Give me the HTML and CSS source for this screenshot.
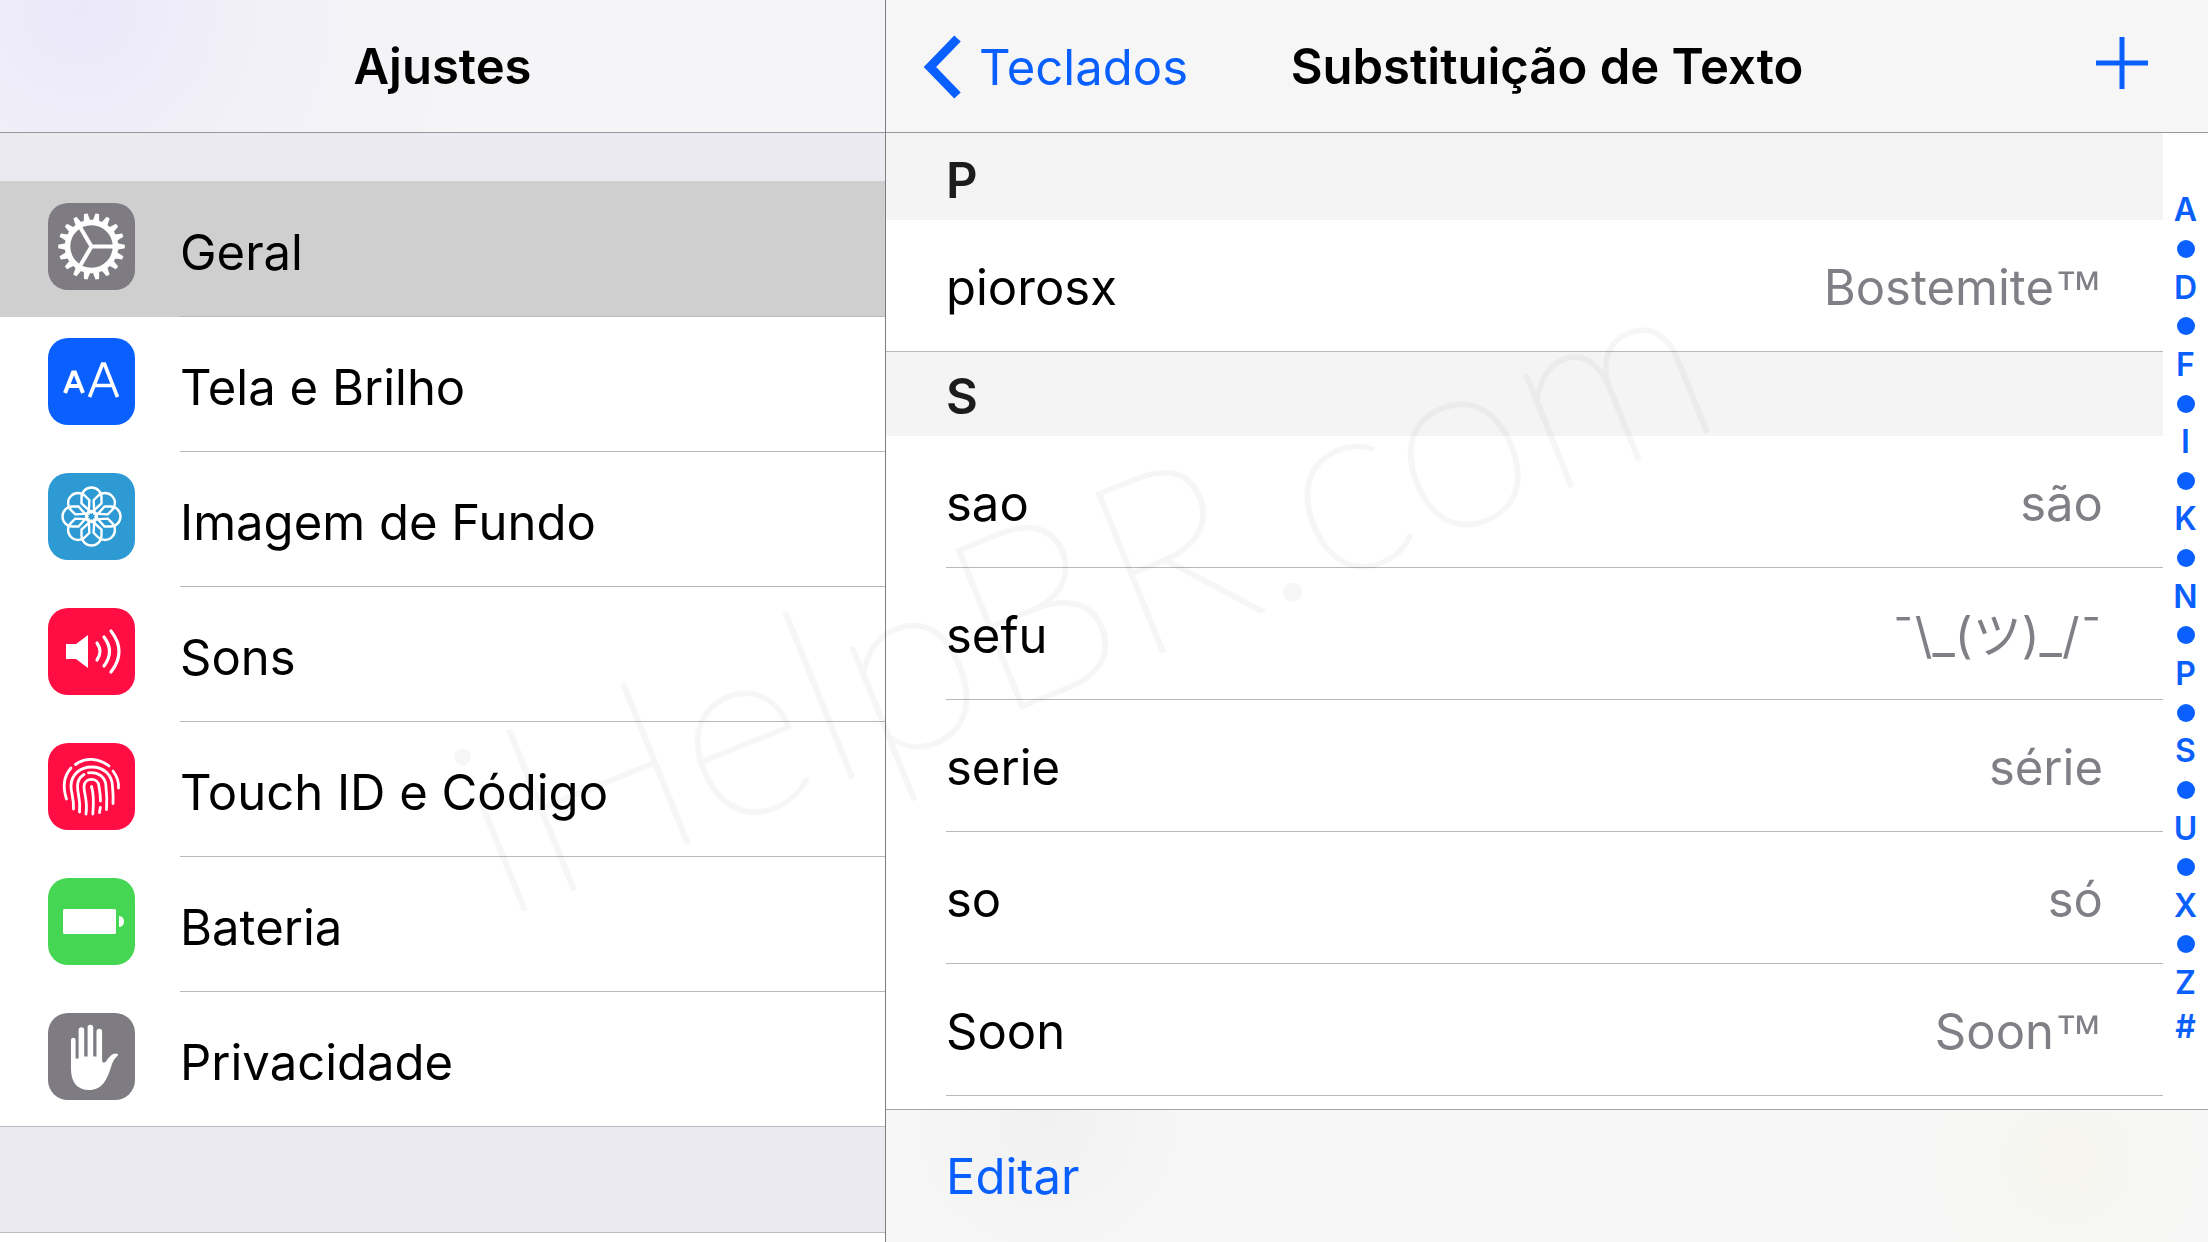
FILE: index.html
```html
<!DOCTYPE html>
<html lang="pt-BR">
<head>
  <meta charset="UTF-8">
  <meta name="viewport" content="width=device-width, initial-scale=1.0">
  <title>Ajustes</title>
  <link rel="stylesheet" href="styles.css">
</head>
<body>
  <div class="split">
    <aside class="sidebar">
      <header class="bar sidebar-bar">
        <h1 class="bar-title">Ajustes</h1>
      </header>
      <nav class="menu">
        <a class="menu-item active" href="#">
          <svg class="icon icon-gray" viewBox="0 0 87 87">
            <circle cx="43.500" cy="43.500" r="24" fill="none" stroke="#fff" stroke-width="5.500"/>
            <g id="teeth" fill="#fff"></g>
            <path d="M43.500 43.500H66M43.500 43.500L32 24M43.500 43.500L32 63" fill="none" stroke="#fff" stroke-width="4"/>
          </svg>
          <span class="menu-label">Geral</span>
        </a>
        <a class="menu-item" href="#">
          <svg class="icon icon-blue" viewBox="0 0 87 87">
            <path d="M17 55L25 34.500H27L35 55M20 48H32" fill="none" stroke="#fff" stroke-width="4"/>
            <path d="M41.500 59L54.500 26H56.500L69.500 59M46 47.500H65" fill="none" stroke="#fff" stroke-width="3.600"/>
          </svg>
          <span class="menu-label">Tela e Brilho</span>
        </a>
        <a class="menu-item" href="#">
          <svg class="icon icon-sky" viewBox="0 0 87 87">
            <defs>
              <path id="petal" d="M43.500 39.500L33.500 30.500V24.500a10 10 0 0 1 20 0V30.500Z"/>
            </defs>
            <g fill="none" stroke="#fff" stroke-width="2.400">
              <use href="#petal"/>
              <use href="#petal" transform="rotate(45 43.500 43.500)"/>
              <use href="#petal" transform="rotate(90 43.500 43.500)"/>
              <use href="#petal" transform="rotate(135 43.500 43.500)"/>
              <use href="#petal" transform="rotate(180 43.500 43.500)"/>
              <use href="#petal" transform="rotate(225 43.500 43.500)"/>
              <use href="#petal" transform="rotate(270 43.500 43.500)"/>
              <use href="#petal" transform="rotate(315 43.500 43.500)"/>
              <circle cx="43.500" cy="43.500" r="5.500"/>
            </g>
          </svg>
          <span class="menu-label">Imagem de Fundo</span>
        </a>
        <a class="menu-item" href="#">
          <svg class="icon icon-red" viewBox="0 0 87 87">
            <path d="M18 36H28L40 27V60L28 51H18Z" fill="#fff"/>
            <path d="M49 35Q55 43.500 49 52M56 29Q67 43.500 56 58M63 23Q79 43.500 63 64" fill="none" stroke="#fff" stroke-width="3.200" stroke-linecap="round"/>
          </svg>
          <span class="menu-label">Sons</span>
        </a>
        <a class="menu-item" href="#">
          <svg class="icon icon-red" viewBox="0 0 87 87">
            <g fill="none" stroke="#fff" stroke-width="2.800" stroke-linecap="round">
              <path d="M18.500 56C14.500 44 16 33 23 25"/>
              <path d="M27.500 21.500C37 14.500 50 14.500 61 23"/>
              <path d="M65 28C69.500 34 71 39 70.500 45"/>
              <path d="M25.500 66C26 54 23 51 23 43C23 32 32 24 43.500 24C56 24 64.500 32 64.500 44C65 50 65.500 54 65 60.500"/>
              <path d="M31.500 69C33 56 29.500 53 29.500 43C29.500 38 32 34 36 31.500"/>
              <path d="M40.500 29.800C50 28.500 58 34 58 44C59 52 59 59 58.500 66.500"/>
              <path d="M38 71C40 57 36 52 36 43.500C36.500 34 50.500 34 51 43.500C52 49 52.500 54 52.500 58"/>
              <path d="M52.300 64.500L51.500 69.500"/>
              <path d="M43.500 43.500C46.500 53 45.500 62 44.800 71"/>
            </g>
          </svg>
          <span class="menu-label">Touch ID e Código</span>
        </a>
        <a class="menu-item" href="#">
          <svg class="icon icon-green" viewBox="0 0 87 87">
            <rect x="15" y="31" width="53" height="25" rx="1.500" fill="#fff"/>
            <path d="M71 38a5 5.500 0 0 1 0 11Z" fill="#fff"/>
          </svg>
          <span class="menu-label">Bateria</span>
        </a>
        <a class="menu-item" href="#">
          <svg class="icon icon-gray" viewBox="0 0 87 87">
            <path d="M23 56V27a2.300 2.300 0 0 1 4.600 0V45.500h3V17a2.800 2.800 0 0 1 5.600 0V43.500h3.400V14.500a2.800 2.800 0 0 1 5.600 0V43.500h3.300V18.500a2.800 2.800 0 0 1 5.600 0V48Q55.500 51 58 48.500C61 44 64 40.500 68 40.500Q71 40.500 69.500 43C66 46 65 48 63 54C59 67 54 77 41 77C29 77 23 69 23 56Z" fill="#fff"/>
          </svg>
          <span class="menu-label">Privacidade</span>
        </a>
      </nav>
      <div class="menu-next"></div>
    </aside>

    <main class="detail">
      <header class="bar detail-bar">
        <a class="back" href="#">
          <svg class="chevron" viewBox="0 0 40 64">
            <path d="M35.500 3.500L8 32L35.500 60.500" fill="none" stroke="currentColor" stroke-width="9"/>
          </svg>
          Teclados
        </a>
        <h2 class="bar-title">Substituição de Texto</h2>
        <button class="add" type="button" aria-label="Adicionar">
          <svg class="plus" viewBox="0 0 52 52">
            <path d="M26 0V52M0 26H52" stroke="currentColor" stroke-width="5"/>
          </svg>
        </button>
      </header>

      <div class="content">
        <div class="list">
          <h3 class="section first">P</h3>
          <dl class="rows">
            <div class="row"><dt>piorosx</dt><dd>Bostemite<span class="tm">™</span></dd></div>
          </dl>
          <h3 class="section">S</h3>
          <dl class="rows">
            <div class="row"><dt>sao</dt><dd>são</dd></div>
            <div class="row"><dt>sefu</dt><dd>¯\_(ツ)_/¯</dd></div>
            <div class="row"><dt>serie</dt><dd>série</dd></div>
            <div class="row"><dt>so</dt><dd>só</dd></div>
            <div class="row"><dt>Soon</dt><dd>Soon<span class="tm">™</span></dd></div>
          </dl>
        </div>
        <nav class="index">
          <a href="#">A</a><i></i>
          <a href="#">D</a><i></i>
          <a href="#">F</a><i></i>
          <a href="#">I</a><i></i>
          <a href="#">K</a><i></i>
          <a href="#">N</a><i></i>
          <a href="#">P</a><i></i>
          <a href="#">S</a><i></i>
          <a href="#">U</a><i></i>
          <a href="#">X</a><i></i>
          <a href="#">Z</a>
          <a class="other" href="#">#</a>
        </nav>
      </div>

      <footer class="toolbar">
        <button class="edit" type="button">Editar</button>
      </footer>
    </main>
  </div>

  <div class="watermark">iHelpBR.com</div>

  <script>
  // 18 teeth around the gear, one every 20 degrees
  const teeth = document.getElementById('teeth');
  for (let i = 0; i < 18; i++) {
    const tooth = document.createElementNS('http://www.w3.org/2000/svg', 'path');
    tooth.setAttribute('d', 'M40 19L41.700 10.200H45.300L47 19Z');
    tooth.setAttribute('transform', 'rotate(' + (i * 20 + 10) + ' 43.500 43.500)');
    teeth.appendChild(tooth);
  }
  </script>
</body>
</html>
```
FILE: styles.css
```css
* {
  box-sizing: border-box;
}
body {
  margin: 0;
  font-family: Inter, "Noto Sans CJK JP", sans-serif;
  font-size: 49px;
  color: #000;
  background: #fff;
  overflow: hidden;
}
h1, h2, h3, dl, dd {
  margin: 0;
}
a {
  color: #0a60ff;
  text-decoration: none;
}
button {
  padding: 0;
  border: 0;
  background: none;
  font: inherit;
  color: #0a60ff;
  cursor: pointer;
}
.split {
  display: grid;
  grid-template-columns: 886fr 1322fr;
  height: 100vh;
}

/* top bars */
.bar {
  height: 133px;
  border-bottom: 1px solid #98989b;
  background: #f6f6f6;
}
.bar-title {
  font-size: 49px;
  font-weight: 600;
  line-height: 134px;
  text-align: center;
}
.sidebar-bar {
  background: radial-gradient(circle at 80px 10px, #eae8fa, #f1f0f8 160px, #f5f5f7 400px);
}
.detail-bar {
  display: grid;
  grid-template-columns: 1fr auto 1fr;
  align-items: center;
  padding: 0 36px;
}
.back {
  display: flex;
  align-items: center;
  gap: 17px;
}
.chevron {
  width: 40px;
  height: 64px;
}
.add {
  justify-self: end;
  padding: 0 24px 8px 0;
}
.plus {
  display: block;
  width: 52px;
  height: 52px;
}

/* left pane */
.sidebar {
  display: flex;
  flex-direction: column;
  border-right: 1px solid #7d7d82;
  background: #ebeaf1;
}
.menu {
  margin-top: 48px;
  border-top: 1px solid #cfcfcf;
  border-bottom: 1px solid #bbbac0;
  background: #fff;
}
.menu-item {
  display: flex;
  align-items: flex-start;
  gap: 45px;
  height: 135px;
  padding-left: 48px;
  color: #000;
}
.menu-item.active {
  background: #cfcfcf;
}
.icon {
  flex: none;
  width: 87px;
  height: 87px;
  margin-top: 21px;
  border-radius: 20px;
}
.icon-gray { background: #7e7c82; }
.icon-blue { background: #0a60ff; }
.icon-sky { background: #2d9ad3; }
.icon-red { background: #ff0d43; }
.icon-green { background: #45d653; }
.menu-label {
  flex: 1;
  height: 135px;
  padding-top: 6px;
  border-bottom: 1px solid #b8b8bb;
  line-height: 130px;
}
.menu-item:last-child {
  height: 134px;
}
.menu-item:last-child .menu-label {
  border-bottom: 0;
  height: 134px;
}
.menu-next {
  flex: 1;
  margin-top: 105px;
  border-top: 1px solid #bbbac0;
  background: #fff;
}

/* right pane */
.detail {
  display: flex;
  flex-direction: column;
  min-width: 0;
}
.content {
  flex: 1;
  display: flex;
  min-height: 0;
}
.list {
  flex: 1;
}
.section {
  padding: 5px 0 0 60px;
  background: #f4f4f4;
  color: #1c1c1c;
  font-size: 49px;
  font-weight: 600;
  line-height: 79px;
}
.section.first {
  padding-top: 8px;
}
.row {
  display: flex;
  justify-content: space-between;
  height: 132px;
  margin-left: 60px;
  padding-right: 60px;
  border-bottom: 1px solid #b8b8bb;
  line-height: 136px;
}
.row:only-child {
  margin-left: 0;
  padding-left: 60px;
}
.row dd {
  color: #807f85;
}
.tm {
  font-family: "Liberation Sans", sans-serif;
  line-height: 1;
}
.index {
  display: flex;
  flex-direction: column;
  width: 45px;
  padding: 58px 0 63px;
}
.index a, .index i {
  flex: 1;
  display: flex;
  align-items: center;
  justify-content: center;
  min-height: 0;
}
.index a {
  font-size: 32px;
  font-weight: 600;
  line-height: 32px;
}
.index .other {
  margin-top: 5px;
}
.index i::before {
  content: "";
  width: 18px;
  height: 18px;
  border-radius: 50%;
  background: #0a60ff;
}
.toolbar {
  height: 133px;
  padding-left: 60px;
  border-top: 1px solid #a5a5a8;
  background:
    radial-gradient(circle at 1180px 50px, #f6f5ef, rgba(246, 245, 239, 0) 150px),
    radial-gradient(circle at 160px 10px, #f1f1f1, rgba(241, 241, 241, 0) 160px),
    #f7f7f7;
}
.edit {
  line-height: 134px;
}

.watermark {
  position: absolute;
  left: 493px;
  bottom: 294px;
  color: #000;
  font-family: Lato, sans-serif;
  font-size: 244px;
  font-weight: 100;
  line-height: 1;
  white-space: nowrap;
  opacity: 0.03;
  -webkit-text-stroke: 3px #000;
  transform: rotate(-22deg);
  transform-origin: 0 80%;
  pointer-events: none;
}
```
